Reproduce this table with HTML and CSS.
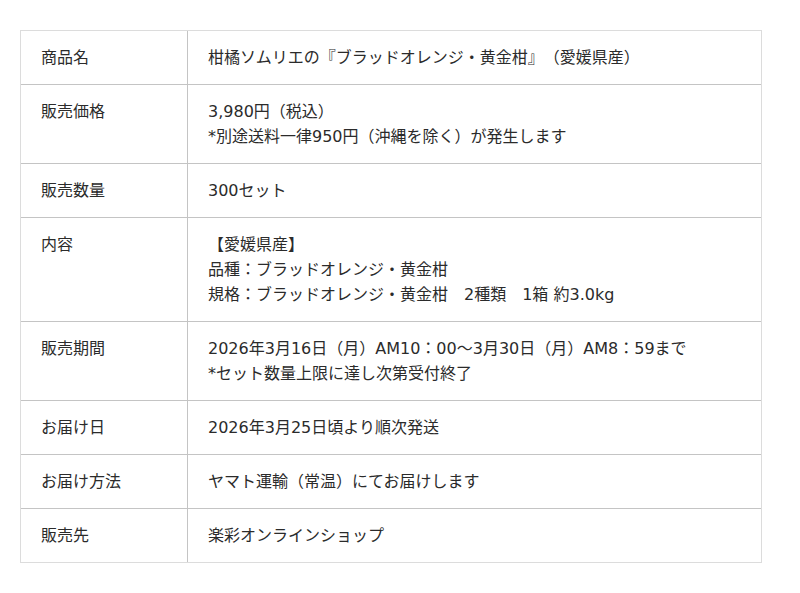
FILE: index.html
```html
<!DOCTYPE html>
<html lang="ja">
<head>
<meta charset="utf-8">
<title>商品情報</title>
<link rel="stylesheet" href="styles.css">
</head>
<body>
<table class="spec">
  <tbody>
    <tr><th>商品名</th><td>柑橘ソムリエの『ブラッドオレンジ・黄金柑』（愛媛県産）</td></tr>
    <tr><th>販売価格</th><td>3,980円（税込）<br>*別途送料一律950円（沖縄を除く）が発生します</td></tr>
    <tr><th>販売数量</th><td>300セット</td></tr>
    <tr><th>内容</th><td>【愛媛県産】<br>品種：ブラッドオレンジ・黄金柑<br>規格：ブラッドオレンジ・黄金柑　2種類　1箱 約3.0kg</td></tr>
    <tr><th>販売期間</th><td>2026年3月16日（月）AM10：00〜3月30日（月）AM8：59まで<br>*セット数量上限に達し次第受付終了</td></tr>
    <tr><th>お届け日</th><td>2026年3月25日頃より順次発送</td></tr>
    <tr><th>お届け方法</th><td>ヤマト運輸（常温）にてお届けします</td></tr>
    <tr><th>販売先</th><td>楽彩オンラインショップ</td></tr>
  </tbody>
</table>
</body>
</html>
```

FILE: styles.css
```css
html, body {
  margin: 0;
  padding: 0;
  background: #fff;
}
body {
  font-family: "DejaVu Sans", "Noto Sans CJK JP", sans-serif;
  font-size: 16px;
  line-height: 25px;
  color: #2b2b2b;
  text-spacing-trim: space-all;
}
.spec {
  margin: 30px 0 0 20px;
  width: 742px;
  border-collapse: separate;
  border-spacing: 0;
  border: 1px solid #dcdcdc;
}
.spec th,
.spec td {
  padding: 14px 20px;
  text-align: left;
  vertical-align: top;
  font-weight: normal;
  border-bottom: 1px solid #c4c4c4;
}
.spec tr:last-child th,
.spec tr:last-child td {
  border-bottom: none;
}
.spec th {
  width: 126px;
  border-right: 1px solid #c4c4c4;
}
```
